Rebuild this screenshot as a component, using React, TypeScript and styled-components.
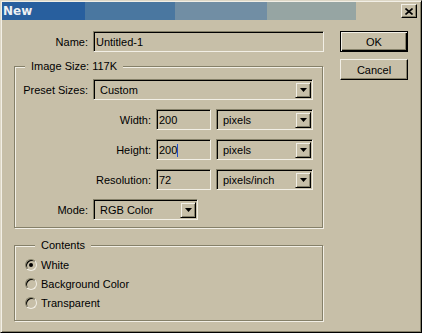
import React from "react";
import styled, { createGlobalStyle } from "styled-components";

const face = "#c7bfa8";
const shadow = "#858069";
const light = "#f2efe6";

const Global = createGlobalStyle`
  html, body { margin: 0; padding: 0; background: ${face}; }
  body { font-family: "Liberation Sans", Arial, sans-serif; font-size: 11px; color: #000; }
`;

const Window = styled.div`
  width: 422px;
  height: 333px;
  box-sizing: border-box;
  background: ${face};
  border: 1px solid;
  border-color: #ddd7c6 #000 #000 #ddd7c6;
  box-shadow: inset 1px 1px 0 ${light}, inset -1px -1px 0 ${shadow};
  padding: 1px;
  display: flex;
  flex-direction: column;
`;

const TitleBar = styled.div`
  height: 18px;
  display: flex;
  align-items: center;
`;

const Caption = styled.div`
  width: 354px;
  height: 100%;
  box-sizing: border-box;
  padding-left: 1px;
  display: flex;
  align-items: center;
  background: linear-gradient(to right, #285f9e 0 83px, #4a77a0 83px 173px, #718ea4 173px 265px, #96a5a3 265px 354px);
  color: #eef0f2;
  font: bold 12px "DejaVu Sans", sans-serif;
`;

const CloseBtn = styled.div`
  margin-left: auto;
  margin-right: 3px;
  width: 16px;
  height: 14px;
  box-sizing: border-box;
  border: 1px solid;
  border-color: ${light} #000 #000 ${light};
  box-shadow: inset -1px -1px 0 ${shadow};
  display: flex;
  align-items: center;
  justify-content: center;
`;

const Body = styled.div`
  display: flex;
  padding: 11px 0 0 12px;
  gap: 15px;
`;

const LeftCol = styled.div`
  width: 311px;
  display: flex;
  flex-direction: column;
`;

const ButtonCol = styled.div`
  display: flex;
  flex-direction: column;
  gap: 7px;
`;

const Row = styled.div`
  display: flex;
  align-items: center;
  gap: 5px;
  height: 21px;
`;

const Label = styled.span<{ $w: number }>`
  width: ${(p) => p.$w}px;
  flex-shrink: 0;
  text-align: right;
  white-space: nowrap;
`;

const Group = styled.fieldset<{ $top: number; $pad: string }>`
  margin: ${(p) => p.$top}px 0 0;
  padding: ${(p) => p.$pad};
  width: 309px;
  box-sizing: border-box;
  min-width: 0;
  border: 1px solid ${shadow};
  box-shadow: inset 1px 1px 0 ${light}, 1px 1px 0 ${light};
`;

const Legend = styled.legend`
  margin-left: 10px;
  padding: 0 6px;
  line-height: 13px;
  background: ${face};
`;

const GroupRows = styled.div<{ $gap: number }>`
  display: flex;
  flex-direction: column;
  gap: ${(p) => p.$gap}px;
`;

const Field = styled.div<{ $w: number }>`
  width: ${(p) => p.$w}px;
  height: 21px;
  box-sizing: border-box;
  border: 1px solid;
  border-color: ${shadow} ${light} ${light} ${shadow};
  box-shadow: inset 1px 1px 0 #000;
  padding: 1px 1px 0 2px;
  display: flex;
  align-items: center;
  background: ${face};
  white-space: nowrap;
`;

const Caret = styled.span`
  display: inline-block;
  width: 1px;
  height: 13px;
  background: #1f4fcf;
`;

const Select = styled.div<{ $w: number }>`
  width: ${(p) => p.$w}px;
  height: 21px;
  box-sizing: border-box;
  border: 1px solid;
  border-color: ${shadow} ${light} ${light} ${shadow};
  box-shadow: inset 1px 1px 0 #000;
  padding: 2px 1px 1px 2px;
  display: flex;
  background: ${face};
`;

const SelectText = styled.span`
  flex: 1;
  padding-left: 4px;
  display: flex;
  align-items: center;
  white-space: nowrap;
`;

const DropBtn = styled.span`
  width: 16px;
  box-sizing: border-box;
  border: 1px solid;
  border-color: ${face} #000 #000 ${face};
  box-shadow: inset 1px 1px 0 ${light}, inset -1px -1px 0 ${shadow};
  display: flex;
  align-items: center;
  justify-content: center;
`;

const Button = styled.div<{ $default?: boolean }>`
  width: 68px;
  height: 21px;
  box-sizing: border-box;
  border: 1px solid;
  border-color: ${(p) => (p.$default ? "#000" : `${light} #000 #000 ${light}`)};
  box-shadow: ${(p) =>
    p.$default
      ? `inset 1px 1px 0 ${light}, inset -1px -1px 0 #000, inset -2px -2px 0 ${shadow}`
      : `inset -1px -1px 0 ${shadow}`};
  display: flex;
  align-items: center;
  justify-content: center;
`;

const RadioRow = styled.div`
  display: flex;
  align-items: center;
  gap: 4px;
  height: 19px;
`;

const Radio = styled.span<{ $on?: boolean }>`
  width: 12px;
  height: 12px;
  box-sizing: border-box;
  border-radius: 50%;
  border: 1px solid;
  border-color: ${shadow} ${light} ${light} ${shadow};
  box-shadow: inset 1px 1px 0 #000;
  display: flex;
  align-items: center;
  justify-content: center;
  &::after {
    content: "";
    width: 4px;
    height: 4px;
    border-radius: 50%;
    background: ${(p) => (p.$on ? "#000" : "transparent")};
  }
`;

const Arrow = () => (
  <svg width="7" height="4" viewBox="0 0 7 4">
    <polygon points="0,0 7,0 3.5,4" fill="#000" />
  </svg>
);

const DropDown: React.FC<{ w: number; value: string }> = ({ w, value }) => (
  <Select $w={w}>
    <SelectText>{value}</SelectText>
    <DropBtn>
      <Arrow />
    </DropBtn>
  </Select>
);

const sizeRows = [
  { label: "Width:", value: "200", unit: "pixels", caret: false },
  { label: "Height:", value: "200", unit: "pixels", caret: true },
  { label: "Resolution:", value: "72", unit: "pixels/inch", caret: false },
];

const contents = [
  { label: "White", on: true },
  { label: "Background Color", on: false },
  { label: "Transparent", on: false },
];

export default function App() {
  return (
    <>
      <Global />
      <Window>
        <TitleBar>
          <Caption>New</Caption>
          <CloseBtn>
            <svg width="8" height="7" viewBox="0 0 8 7">
              <path d="M0.5 0.5 L7.5 6.5 M7.5 0.5 L0.5 6.5" stroke="#000" strokeWidth="1.6" />
            </svg>
          </CloseBtn>
        </TitleBar>
        <Body>
          <LeftCol>
            <Row>
              <Label $w={74}>Name:</Label>
              <Field $w={231}>Untitled-1</Field>
            </Row>
            <Group $top={8} $pad="6px 0 7px 0">
              <Legend>Image Size: 117K</Legend>
              <GroupRows $gap={9}>
                <Row>
                  <Label $w={73}>Preset Sizes:</Label>
                  <DropDown w={220} value="Custom" />
                </Row>
                {sizeRows.map((r) => (
                  <Row key={r.label}>
                    <Label $w={136}>{r.label}</Label>
                    <Field $w={55}>
                      {r.value}
                      {r.caret && <Caret />}
                    </Field>
                    <DropDown w={97} value={r.unit} />
                  </Row>
                ))}
                <Row>
                  <Label $w={73}>Mode:</Label>
                  <DropDown w={105} value="RGB Color" />
                </Row>
              </GroupRows>
            </Group>
            <Group $top={11} $pad="3px 0 8px 10px">
              <Legend>Contents</Legend>
              <GroupRows $gap={0}>
                {contents.map((c) => (
                  <RadioRow key={c.label}>
                    <Radio $on={c.on} />
                    {c.label}
                  </RadioRow>
                ))}
              </GroupRows>
            </Group>
          </LeftCol>
          <ButtonCol>
            <Button $default>OK</Button>
            <Button>Cancel</Button>
          </ButtonCol>
        </Body>
      </Window>
    </>
  );
}
